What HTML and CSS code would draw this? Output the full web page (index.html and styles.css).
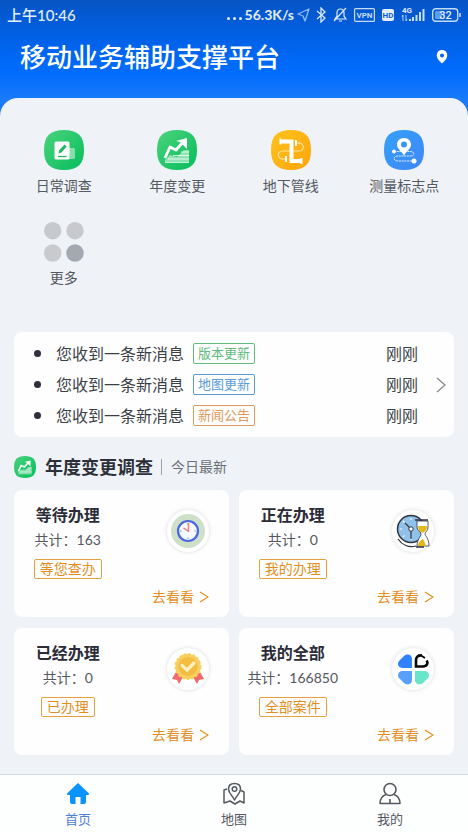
FILE: index.html
```html
<!DOCTYPE html>
<html lang="zh-CN">
<head>
<meta charset="utf-8">
<meta name="viewport" content="width=device-width, initial-scale=1">
<title>移动业务辅助支撑平台</title>
<link rel="stylesheet" href="styles.css">
</head>
<body>
<svg class="defs" aria-hidden="true">
  <defs>
    <linearGradient id="green" x1="0" y1="0" x2="1" y2="1"><stop offset="0" stop-color="#4bd37c"/><stop offset="1" stop-color="#06bd5c"/></linearGradient>
    <linearGradient id="amber" x1="0" y1="0" x2="1" y2="1"><stop offset="0" stop-color="#ffc21c"/><stop offset="1" stop-color="#fda50c"/></linearGradient>
    <linearGradient id="blue" x1="0" y1="0" x2="1" y2="1"><stop offset="0" stop-color="#35a1fb"/><stop offset="1" stop-color="#3f86f4"/></linearGradient>
    <symbol id="trend" viewBox="0 0 40 40">
      <path d="M20 0C34 0 40 6 40 20S34 40 20 40 0 34 0 20 6 0 20 0Z" fill="url(#green)"/>
      <path d="M8 32V30L13 25L20 27L27 20H32V32Z" fill="#fff" opacity=".5"/>
      <path d="M8 32.500H32M11 29H32M16 25.500H32M24 22H32" stroke="#fff" stroke-width="1" opacity=".75"/>
      <path d="M8 28L13 17L19 20L26 12" fill="none" stroke="#fff" stroke-width="2.800" stroke-linejoin="round"/>
      <path d="M19 11L30 8V19L26 15L23 12Z" fill="#fff"/>
    </symbol>
    <symbol id="chevron" viewBox="0 0 10 16">
      <path d="M1 1L9 8L1 15" fill="none" stroke="currentColor" stroke-width="1.300"/>
    </symbol>
    <symbol id="chevron-small" viewBox="0 0 10 12">
      <path d="M1 1L9 6L1 11" fill="none" stroke="currentColor" stroke-width="1.200"/>
    </symbol>
  </defs>
</svg>

<header class="top">
  <div class="status">
    <span class="clock">上午10:46</span>
    <div class="status-right">
      <span class="dots"><i></i><i></i><i></i></span>
      <span>56.3K/s</span>
      <div class="status-icons">
        <svg width="13" height="14" viewBox="0 0 13 14"><path d="M12 1L1 6L6 8L8 13Z" fill="none" stroke="#8fbcf2" stroke-width="1.300" stroke-linejoin="round"/></svg>
        <svg width="11" height="16" viewBox="0 0 11 16"><path d="M1 4L9 11L5 15V1L9 5L1 12" fill="none" stroke="#dbe9fc" stroke-width="1.300"/></svg>
        <svg width="15" height="16" viewBox="0 0 15 16"><path d="M2 12H13L11 9V6C11 3 9 2 7.500 2S4 3 4 6V9L2 12ZM6 14H9M1 14L13 1" fill="none" stroke="#dbe9fc" stroke-width="1.200"/></svg>
        <svg width="21" height="14" viewBox="0 0 21 14"><rect x=".6" y=".6" width="19.800" height="12.800" rx="1" fill="none" stroke="#c4dbf8" stroke-width="1.200"/><text x="10.500" y="10" class="glyph-text" fill="#c4dbf8">VPN</text></svg>
        <svg width="14" height="14" viewBox="0 0 14 14"><rect x="1" y="1" width="12" height="12" rx="2" fill="#e3eefc"/><text x="7" y="10" class="glyph-text" fill="#0a5fd4">HD</text></svg>
        <svg width="25" height="16" viewBox="0 0 25 16"><text x="6" y="6" class="glyph-text" fill="#dbe9fc">4G</text><path d="M2 14V8L1 10M5 8V14L6 12" fill="none" stroke="#a9cbf6" stroke-width="1"/><path d="M9 14V12M12 14V10M15.500 14V8M19 14V5M22.500 14V2" stroke="#c9defa" stroke-width="2"/></svg>
        <svg width="29" height="14" viewBox="0 0 29 14"><rect x=".7" y=".7" width="25" height="12.600" rx="3" fill="none" stroke="#c4dbf8" stroke-width="1.400"/><rect x="3" y="3" width="7" height="8" rx="1" fill="#5f9ced"/><path d="M28 5V9" stroke="#c4dbf8" stroke-width="1.500"/><text x="13.500" y="11" class="battery-text" fill="#e3eefc">32</text></svg>
      </div>
    </div>
  </div>
  <div class="title-row">
    <h1>移动业务辅助支撑平台</h1>
    <button class="locate" type="button" aria-label="定位"><svg width="12" height="14" viewBox="0 0 12 14"><path fill="#fff" fill-rule="evenodd" d="M6 0C2.500 0 .8 2.500 .8 5.400C.8 9 4 11 6 13.500C8 11 11.200 9 11.200 5.400C11.200 2.500 9.500 0 6 0ZM6 3.400A2 2 0 1 1 6 7.400A2 2 0 1 1 6 3.400Z"/></svg></button>
  </div>
</header>

<main class="sheet">
  <nav class="tools" aria-label="功能">
    <a class="tool" href="#daily">
      <svg width="40" height="40" viewBox="0 0 40 40"><path d="M20 0C34 0 40 6 40 20S34 40 20 40 0 34 0 20 6 0 20 0Z" fill="url(#green)"/><rect x="20" y="18" width="11" height="11" rx="1.500" fill="#fff" opacity=".45"/><rect x="10.500" y="11.500" width="15" height="18" rx="1.500" fill="#fff"/><path d="M14.500 23.500L15.200 20.200L20.500 14.500L22.700 16.500L17.500 22.500Z" fill="#22b863"/><path d="M14 26.500H22.500" stroke="#22b863" stroke-width="1.300"/></svg>
      <span>日常调查</span>
    </a>
    <a class="tool" href="#yearly">
      <svg width="40" height="40"><use href="#trend"/></svg>
      <span>年度变更</span>
    </a>
    <a class="tool" href="#pipes">
      <svg width="40" height="40" viewBox="0 0 40 40"><path d="M20 0C34 0 40 6 40 20S34 40 20 40 0 34 0 20 6 0 20 0Z" fill="url(#amber)"/><path d="M26 13C34 12 34 21 28 21H12C5 21 6 30 14 29" fill="none" stroke="#ffe29a" stroke-width="1.200"/><path d="M10 11.500H20.500V31H30" fill="none" stroke="#fff" stroke-width="4"/><path d="M9.500 8.500V14.500M30.500 28V34M25 10V16M15 26V32" stroke="#fff" stroke-width="2"/></svg>
      <span>地下管线</span>
    </a>
    <a class="tool" href="#markers">
      <svg width="40" height="40" viewBox="0 0 40 40"><path d="M20 0C34 0 40 6 40 20S34 40 20 40 0 34 0 20 6 0 20 0Z" fill="url(#blue)"/><path d="M10 21.500H26C31 21.500 31 26 27 26H14C9 26 9 31 14 31H29" fill="none" stroke="#fff" stroke-width="1" stroke-dasharray="2 .7" opacity=".85"/><circle cx="10" cy="21.500" r="1.900" fill="#fff"/><circle cx="30" cy="31" r="2.500" fill="#fff"/><path fill="#fff" fill-rule="evenodd" d="M20 8C15.500 8 13 11 13 14.500C13 18.500 17 20.500 20 25.500C23 20.500 27 18.500 27 14.500C27 11 24.500 8 20 8ZM20 11.500A3 3 0 1 1 20 17.500A3 3 0 1 1 20 11.500Z"/></svg>
      <span>测量标志点</span>
    </a>
    <a class="tool" href="#more">
      <svg width="40" height="40" viewBox="0 0 40 40"><circle cx="8.700" cy="8.700" r="8.700" fill="#c6c9ce"/><circle cx="31" cy="8.700" r="8.700" fill="#c8c9cc"/><circle cx="8.700" cy="31" r="8.700" fill="#c8cacd"/><circle cx="31" cy="31" r="8.700" fill="#a4a8b0"/></svg>
      <span>更多</span>
    </a>
  </nav>

  <section class="messages">
    <ul>
      <li><span class="text">您收到一条新消息</span><span class="tag green">版本更新</span><time>刚刚</time></li>
      <li><span class="text">您收到一条新消息</span><span class="tag blue">地图更新</span><time>刚刚</time></li>
      <li><span class="text">您收到一条新消息</span><span class="tag orange">新闻公告</span><time>刚刚</time></li>
    </ul>
    <a class="messages-more" href="#messages" aria-label="查看消息"><svg width="10" height="16"><use href="#chevron"/></svg></a>
  </section>

  <div class="section-head">
    <svg width="22" height="22"><use href="#trend"/></svg>
    <h2>年度变更调查</h2>
    <span class="sub">今日最新</span>
  </div>

  <section class="cards">
    <article class="card">
      <div class="info"><h3>等待办理</h3><p>共计：163</p><span class="badge">等您查办</span></div>
      <div class="side">
        <span class="disc"><svg width="34" height="34" viewBox="0 0 34 34"><circle cx="17" cy="17" r="17" fill="#cfe0c9"/><circle cx="17" cy="17" r="10" fill="#f5faff" stroke="#4a66e0" stroke-width="2.200"/><path d="M17 9V10.500M17 23.500V25M9 17H10.500M23.500 17H25" stroke="#6f8be6" stroke-width="1"/><path d="M17.500 9V18M17.500 17.500L12.500 14" stroke="#ee7c78" stroke-width="1.500"/></svg></span>
        <a href="#waiting">去看看<svg width="10" height="12"><use href="#chevron-small"/></svg></a>
      </div>
    </article>
    <article class="card">
      <div class="info"><h3>正在办理</h3><p>共计：0</p><span class="badge">我的办理</span></div>
      <div class="side">
        <span class="disc"><svg width="34" height="34" viewBox="0 0 34 34"><circle cx="15" cy="15" r="13.500" fill="#8fc1ea" stroke="#30343f" stroke-width="1.500"/><path d="M15 4V6M15 24V26M4 15H6M7 7L8.500 8.500M7 23L8.500 21.500M23 7L21.500 8.500" stroke="#fff" stroke-width="1.200"/><path d="M9 9L15 15V25" fill="none" stroke="#30343f" stroke-width="1.200"/><circle cx="15" cy="15" r="2.200" fill="#fff" stroke="#30343f"/><path d="M2 25C6 31 13 34 20 32" fill="none" stroke="#30343f" stroke-width="1.300"/><path d="M21 7H32V13C32 17 29 18 29 20S33 24 33 32H21C21 25 25 23 25 20S21 17 21 13Z" fill="#fff" stroke="#30343f" stroke-width=".8"/><path d="M22 12H31C31 17 28 18 27 19C25 18 22 17 22 12ZM22 32C22 28 25 26 27 25C29 28 29 30 30 32Z" fill="#e2b91c"/><path d="M19 6H32M20 33H28" stroke="#30343f" stroke-width="1.400"/></svg></span>
        <a href="#processing">去看看<svg width="10" height="12"><use href="#chevron-small"/></svg></a>
      </div>
    </article>
    <article class="card">
      <div class="info"><h3>已经办理</h3><p>共计：0</p><span class="badge">已办理</span></div>
      <div class="side">
        <span class="disc"><svg width="34" height="34" viewBox="0 0 34 34"><path d="M5 20L12 25L8 32L6 28L1 27Z" fill="#f0696d"/><path d="M29 20L22 25L26 32L28 28L33 27Z" fill="#f0696d"/><circle cx="17" cy="14.500" r="12.500" fill="#f7cf5e" stroke="#f7cf5e" stroke-width="1.800" stroke-dasharray="3 1.500"/><circle cx="17" cy="14.500" r="9.500" fill="#f3bd43"/><path d="M11 13.500L16 18L23 11" fill="none" stroke="#fff0bf" stroke-width="3.200" stroke-linecap="round"/></svg></span>
        <a href="#done">去看看<svg width="10" height="12"><use href="#chevron-small"/></svg></a>
      </div>
    </article>
    <article class="card">
      <div class="info"><h3>我的全部</h3><p>共计：166850</p><span class="badge">全部案件</span></div>
      <div class="side">
        <span class="disc"><svg width="32" height="32" viewBox="0 0 32 32"><path d="M15 15H6C0 15 0 9 3 7L7 3C11 0 15 2 15 6Z" fill="#2f82fb"/><path d="M15 18H6C0 18 0 24 3 26L7 30C11 33 15 31 15 27Z" fill="#58a0fa"/><path d="M18 18H27C33 18 33 24 30 26L26 30C22 33 18 31 18 27Z" fill="#67e6ca"/><path d="M25 2.500C21 2 19 4 19 7V13.500H26C30 13.500 31.500 10 29.500 7.500" fill="#fff" stroke="#080808" stroke-width="2.600"/><path d="M24 2.500L28 5" stroke="#080808" stroke-width="2"/></svg></span>
        <a href="#all">去看看<svg width="10" height="12"><use href="#chevron-small"/></svg></a>
      </div>
    </article>
  </section>
</main>

<nav class="tabs" aria-label="主导航">
  <a class="active" href="#home"><svg width="24" height="24" viewBox="0 0 24 24"><path d="M12 1L23 11.500Q23.300 13 22 13H20V20Q20 22 18 22H14.500V15H9.500V22H6Q4 22 4 20V13H2Q.7 13 1 11.500Z" fill="#0a93fb"/></svg>首页</a>
  <a href="#map"><svg width="24" height="24" viewBox="0 0 24 24"><g fill="none" stroke="#55585e" stroke-width="1.500" stroke-linejoin="round"><path d="M5 7L2 8V21L8 19L13 22L18 19L22 21V10L19 8.500"/><path d="M12.500 18C10 13 6.500 11 6.500 7C6.500 3.500 9 1.500 12.500 1.500S18.500 3.500 18.500 7C18.500 11 15 13 12.500 18Z"/><circle cx="12.500" cy="7" r="2.300"/></g></svg>地图</a>
  <a href="#me"><svg width="24" height="24" viewBox="0 0 24 24"><g fill="none" stroke="#55585e" stroke-width="1.600" stroke-linejoin="round"><circle cx="12" cy="7.500" r="6"/><path d="M8 12.500C4 14 2 17 2 21.500H22C22 17 20 14 16 12.500M12 17V21.500"/></g></svg>我的</a>
</nav>
</body>
</html>
```
FILE: styles.css
```css
* {
  box-sizing: border-box;
}

body {
  margin: 0;
  min-height: 100vh;
  display: flex;
  flex-direction: column;
  background: #eff3f8;
  color: #55585e;
  font-family: Lato, "Noto Sans CJK SC", sans-serif;
  font-size: 14px;
  line-height: 20px;
}

h1, h2, h3, p, ul {
  margin: 0;
  padding: 0;
}

a {
  color: inherit;
  text-decoration: none;
}

svg {
  display: block;
  flex: none;
}

.defs {
  position: absolute;
  width: 0;
  height: 0;
}

/* Header */

.top {
  padding-bottom: 32px;
  background: linear-gradient(#0654c4, #0062e8 40px, #006cfd 72px, #1a7afa 100px);
  color: #fff;
}

.status {
  display: flex;
  justify-content: space-between;
  align-items: center;
  height: 30px;
  padding: 0 7px;
  color: #e3eefc;
  font-weight: 700;
}

.clock {
  font-size: 15px;
  font-weight: 500;
}

.status-right,
.status-icons {
  display: flex;
  align-items: center;
}

.status-right {
  gap: 3px;
}

.status-icons {
  gap: 6px;
}

.dots {
  display: flex;
  gap: 3px;
  padding-top: 6px;
}

.dots i {
  width: 3px;
  height: 3px;
  border-radius: 50%;
  background: #e3eefc;
}

.glyph-text {
  font: 700 8px Roboto, sans-serif;
  text-anchor: middle;
}

.battery-text {
  font: 500 11px Roboto, sans-serif;
  text-anchor: middle;
}

.title-row {
  display: flex;
  justify-content: space-between;
  align-items: center;
  height: 54px;
  padding: 0 20px;
}

h1 {
  font-size: 26px;
  font-weight: 500;
  line-height: 32px;
}

.locate {
  padding: 0;
  border: 0;
  background: none;
}

/* Content */

.sheet {
  flex: 1;
  margin-top: -18px;
  padding: 32px 14px 18px;
  border-radius: 18px 18px 0 0;
  background: #eff3f8;
}

.tools {
  display: grid;
  grid-template-columns: repeat(4, 1fr);
  row-gap: 26px;
  margin: 0 -7px;
}

.tool {
  display: flex;
  flex-direction: column;
  align-items: center;
  gap: 6px;
}

.messages {
  display: flex;
  align-items: center;
  margin-top: 44px;
  padding: 6px 8px 6px 20px;
  border-radius: 8px;
  background: #fefefe;
  color: #3c3e46;
  font-size: 16px;
}

.messages ul {
  flex: 1;
  list-style: none;
}

.messages li {
  display: flex;
  align-items: center;
  height: 31px;
}

.messages li::before {
  content: "";
  width: 7px;
  height: 7px;
  margin-right: 15px;
  border-radius: 50%;
  background: #2e2f3c;
}

.tag {
  margin-left: 9px;
  padding: 0 4px;
  border: 1px solid;
  border-radius: 2px;
  font-size: 13px;
  line-height: 19px;
}

.green {
  color: #62ba7c;
}

.blue {
  color: #5b9bd8;
}

.orange {
  color: #dd9a58;
}

.messages time {
  margin-left: auto;
}

.messages-more {
  margin-left: 18px;
  color: #85888d;
}

.section-head {
  display: flex;
  align-items: center;
  height: 53px;
  padding-top: 7px;
}

h2 {
  margin-left: 9px;
  color: #2d3038;
  font-size: 18px;
  font-weight: 700;
}

.sub {
  display: flex;
  align-items: center;
  color: #6d7076;
}

.sub::before {
  content: "";
  width: 1px;
  height: 16px;
  margin: 0 9px 0 8px;
  background: #a0a3a8;
}

.cards {
  display: grid;
  grid-template-columns: 1fr 1fr;
  gap: 11px 10px;
}

.card {
  display: grid;
  grid-template-columns: 1fr 1fr;
  padding: 13px 0 10px;
  border-radius: 8px;
  background: #fefefe;
}

.info {
  display: flex;
  flex-direction: column;
  align-items: center;
}

h3 {
  color: #2b2c38;
  font-size: 16px;
  font-weight: 700;
  line-height: 24px;
}

.info p {
  margin-top: 3px;
  white-space: nowrap;
}

.badge {
  margin-top: 9px;
  padding: 0 5px;
  border: 1px solid #e6a040;
  border-radius: 2px;
  color: #e28e1e;
  line-height: 18px;
}

.side {
  display: flex;
  flex-direction: column;
  align-items: flex-end;
  gap: 35px;
  padding: 7px 20px 0 0;
}

.disc {
  display: grid;
  place-items: center;
  width: 42px;
  height: 42px;
  border-radius: 50%;
  background: #fff;
  box-shadow: 0 0 4px #d9dcdf;
}

.side a {
  display: flex;
  align-items: center;
  gap: 5px;
  color: #e28e1e;
}

/* Bottom tabs */

.tabs {
  display: grid;
  grid-template-columns: repeat(3, 1fr);
  border-top: 1px solid #d3dce4;
  background: #fdfefe;
  font-size: 13px;
  line-height: 18px;
}

.tabs a {
  display: flex;
  flex-direction: column;
  align-items: center;
  gap: 4px;
  padding: 7px 0 4px;
}

.tabs .active {
  color: #4f80d8;
}
```
